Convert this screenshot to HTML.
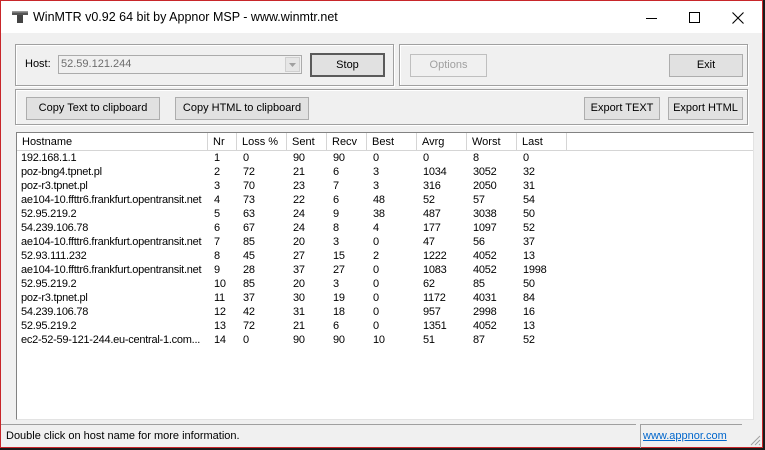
<!DOCTYPE html>
<html><head><meta charset="utf-8"><style>
*{margin:0;padding:0;box-sizing:border-box}
body{width:765px;height:450px;background:#1a1a1a;position:relative;overflow:hidden;font-family:"Liberation Sans",sans-serif;font-size:11px;color:#000}
.win{position:absolute;left:0;top:0;width:763px;height:448px;border:1px solid #c8262a;background:#f0f0f0}
.title{position:absolute;left:0;top:0;width:761px;height:32px;background:#fff}
.title .t{position:absolute;left:32px;top:9px;font-size:12.5px;color:#000}
.abs{position:absolute}
.grp{position:absolute;border:1px solid #a0a0a0;box-shadow:inset 1px 1px 0 #fff,1px 1px 0 #fff}
.btn{position:absolute;background:#e1e1e1;border:1px solid #adadad;text-align:center;line-height:20px;font-size:11px}
.list{position:absolute;left:15px;top:131px;width:738px;height:288px;background:#fff;border:1px solid #828282;border-right-color:#e3e3e3;border-bottom-color:#e3e3e3}
.hdr{position:absolute;top:0;height:18px;line-height:18px;border-right:1px solid #d5d5d5;border-bottom:1px solid #d5d5d5;padding-left:5px;background:#fff}
.row{position:absolute;left:0;height:14px;line-height:14px;white-space:nowrap;letter-spacing:-0.25px}
.row span{position:absolute;top:0}
</style></head><body>
<div class="win">
<div class="title">
<svg class="abs" style="left:11px;top:10px" width="16" height="12"><rect x="0" y="0" width="16" height="4" fill="#555"/><rect x="0" y="0" width="16" height="1.5" fill="#999"/><rect x="5" y="4" width="6" height="8" fill="#444"/></svg>
<div class="t">WinMTR v0.92 64 bit by Appnor MSP - www.winmtr.net</div>
<div class="abs" style="left:645px;top:17px;width:11px;height:1px;background:#000"></div>
<div class="abs" style="left:688px;top:11px;width:11px;height:11px;border:1px solid #000"></div>
<svg class="abs" style="left:731px;top:11px" width="12" height="12"><path d="M0.5 0.5L11.5 11.5M11.5 0.5L0.5 11.5" stroke="#000" stroke-width="1.1"/></svg>
</div>

<div class="grp" style="left:14px;top:43px;width:379px;height:42px"></div>
<div class="grp" style="left:398px;top:43px;width:349px;height:42px"></div>
<div class="grp" style="left:14px;top:88px;width:733px;height:36px"></div>

<div class="abs" style="left:24px;top:57px">Host:</div>
<div class="abs" style="left:57px;top:54px;width:244px;height:19px;border:1px solid #ababab;background:#f0f0f0;color:#6d6d6d;padding-left:2px;line-height:17px">52.59.121.244
<div class="abs" style="right:1px;top:1px;width:15px;height:15px;background:#e6e6e6;border:1px solid #cfcfcf"><svg width="13" height="13"><path d="M3 5L10 5L6.5 9Z" fill="#a0a0a0"/></svg></div></div>
<div class="btn" style="left:309px;top:52px;width:75px;height:24px;border:2px solid #5a5a5a;line-height:20px">Stop</div>
<div class="btn" style="left:409px;top:53px;width:77px;height:23px;color:#a0a0a0;border-color:#bfbfbf;background:#f0f0f0">Options</div>
<div class="btn" style="left:668px;top:53px;width:74px;height:23px">Exit</div>
<div class="btn" style="left:25px;top:96px;width:134px;height:23px">Copy Text to clipboard</div>
<div class="btn" style="left:174px;top:96px;width:134px;height:23px">Copy HTML to clipboard</div>
<div class="btn" style="left:583px;top:96px;width:76px;height:23px">Export TEXT</div>
<div class="btn" style="left:667px;top:96px;width:75px;height:23px">Export HTML</div>

<div class="list">
<div class="hdr" style="left:0;width:191px">Hostname</div>
<div class="hdr" style="left:191px;width:29px">Nr</div>
<div class="hdr" style="left:220px;width:50px">Loss %</div>
<div class="hdr" style="left:270px;width:40px">Sent</div>
<div class="hdr" style="left:310px;width:40px">Recv</div>
<div class="hdr" style="left:350px;width:50px">Best</div>
<div class="hdr" style="left:400px;width:50px">Avrg</div>
<div class="hdr" style="left:450px;width:50px">Worst</div>
<div class="hdr" style="left:500px;width:50px">Last</div>
<div class="hdr" style="left:550px;width:186px;border-right:none"></div>
<div id="rows"></div>
</div>

<div class="abs" style="left:0;top:423px;width:635px;height:24px;border-top:1px solid #a0a0a0"></div>
<div class="abs" style="left:5px;top:429px">Double click on host name for more information.</div>
<div class="abs" style="left:639px;top:423px;width:102px;height:24px;border-top:1px solid #a0a0a0;border-left:1px solid #a0a0a0"></div>
<div class="abs" style="left:642px;top:429px;color:#0066cc;text-decoration:underline">www.appnor.com</div>
<svg class="abs" style="left:748px;top:433px" width="12" height="12"><path d="M11 2L2 11M11 6L6 11M11 10L10 11" stroke="#a0a0a0"/></svg>
</div>
<script>
var d=[["192.168.1.1",1,0,90,90,0,0,8,0],["poz-bng4.tpnet.pl",2,72,21,6,3,1034,3052,32],["poz-r3.tpnet.pl",3,70,23,7,3,316,2050,31],["ae104-10.ffttr6.frankfurt.opentransit.net",4,73,22,6,48,52,57,54],["52.95.219.2",5,63,24,9,38,487,3038,50],["54.239.106.78",6,67,24,8,4,177,1097,52],["ae104-10.ffttr6.frankfurt.opentransit.net",7,85,20,3,0,47,56,37],["52.93.111.232",8,45,27,15,2,1222,4052,13],["ae104-10.ffttr6.frankfurt.opentransit.net",9,28,37,27,0,1083,4052,1998],["52.95.219.2",10,85,20,3,0,62,85,50],["poz-r3.tpnet.pl",11,37,30,19,0,1172,4031,84],["54.239.106.78",12,42,31,18,0,957,2998,16],["52.95.219.2",13,72,21,6,0,1351,4052,13],["ec2-52-59-121-244.eu-central-1.com...",14,0,90,90,10,51,87,52]];
var x=[4,197,226,276,316,356,406,456,506],h="";
d.forEach(function(r,i){h+='<div class="row" style="top:'+(18+i*14)+'px">';r.forEach(function(v,j){h+='<span style="left:'+x[j]+'px">'+v+'</span>'});h+='</div>'});
document.getElementById("rows").innerHTML=h;
</script>
</body></html>
